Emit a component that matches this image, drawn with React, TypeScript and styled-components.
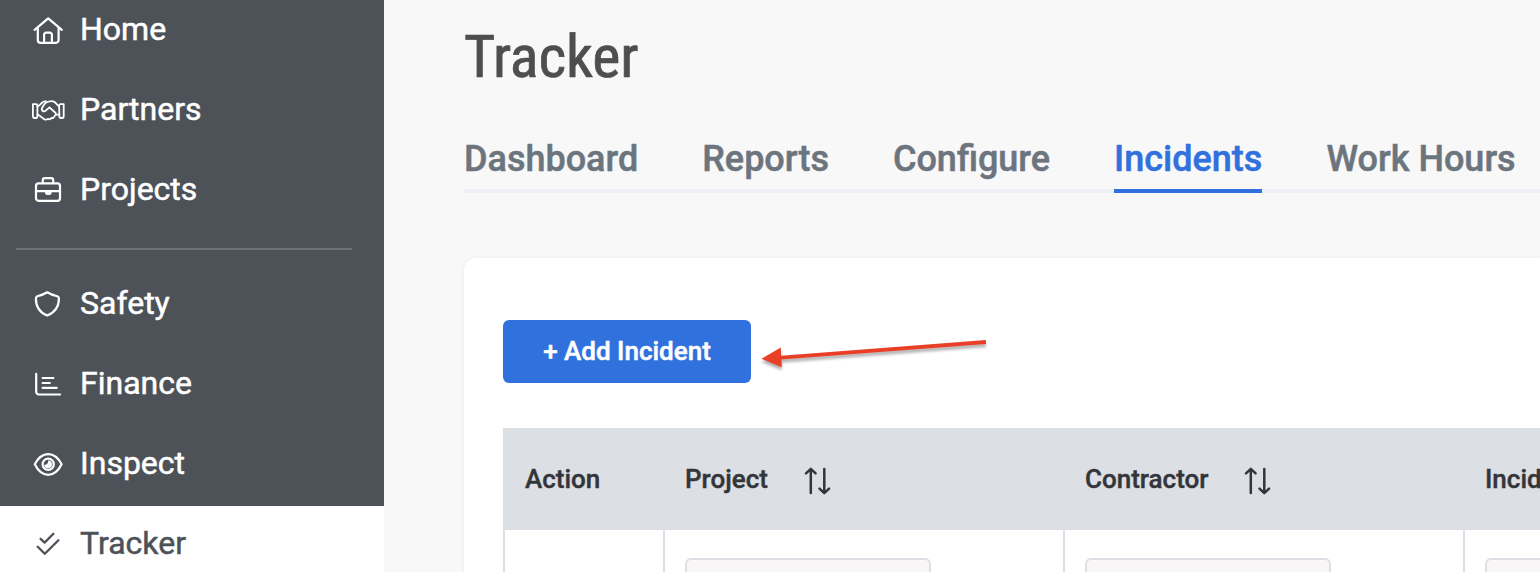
import React from "react";
import styled, { createGlobalStyle } from "styled-components";

const Global = createGlobalStyle`
  * { box-sizing: border-box; }
  body { margin: 0; font-family: Roboto, "Liberation Sans", sans-serif; background: #f8f8f8; overflow: hidden; }
`;

const Page = styled.div`
  display: flex;
  width: 100%;
  height: 572px;
  overflow: hidden;
`;

const Sidebar = styled.nav`
  flex: 0 0 384px;
  height: 572px;
  background: #4d5259;
  overflow: hidden;
`;

const NavList = styled.div`
  display: flex;
  flex-direction: column;
  margin-top: -8px;
`;

const NavItem = styled.a<{ $active?: boolean }>`
  display: flex;
  flex: 0 0 80px;
  align-items: center;
  gap: 16px;
  padding: 0 32px 4px;
  color: ${(p) => (p.$active ? "#4d5259" : "#ffffff")};
  background: ${(p) => (p.$active ? "#ffffff" : "transparent")};
`;

const NavLabel = styled.span`
  font-size: 32px;
  line-height: 38px;
  padding-bottom: 3px;
  white-space: nowrap;
  -webkit-text-stroke: 0.5px currentColor;
`;

const NavIcon = styled.svg`
  flex: none;
  width: 32px;
  height: 32px;
  overflow: visible;
  fill: none;
  stroke: currentColor;
  stroke-width: 2.2;
  stroke-linecap: round;
  stroke-linejoin: round;
`;

const Divider = styled.hr`
  width: 336px;
  height: 2px;
  margin: 16px;
  border: 0;
  background: #6d7279;
`;

const Main = styled.main`
  flex: 1;
  min-width: 0;
  padding: 21px 0 0 80px;
  overflow: hidden;
`;

const Title = styled.h1`
  margin: 0;
  height: 72px;
  width: max-content;
  font-size: 60px;
  line-height: 72px;
  font-weight: 400;
  letter-spacing: -0.15px;
  font-stretch: 75%;
  font-family: "Roboto Condensed", Roboto, sans-serif;
  color: #4e4e4e;
  -webkit-text-stroke: 0.7px currentColor;
`;

const Tabs = styled.div`
  display: flex;
  gap: 64px;
  height: 60px;
  margin-top: 40px;
  box-shadow: inset 0 -4px #edf1f6;
`;

const Tab = styled.a<{ $active?: boolean }>`
  flex: none;
  height: 60px;
  font-size: 36px;
  line-height: 52px;
  font-weight: 500;
  white-space: nowrap;
  color: ${(p) => (p.$active ? "#3071de" : "#6c757e")};
  border-bottom: 4px solid ${(p) => (p.$active ? "#3071de" : "transparent")};
  -webkit-text-stroke: 0.5px currentColor;
`;

const Card = styled.section`
  margin-top: 65px;
  height: 400px;
  padding: 62px 0 0 39px;
  background: #ffffff;
  border-radius: 12px 0 0 0;
  box-shadow: 0 0 4px rgba(0, 0, 0, 0.06);
`;

const ActionRow = styled.div`
  display: flex;
  position: relative;
`;

const AddButton = styled.button`
  width: 248px;
  height: 63px;
  padding: 0 0 1px;
  border: 0;
  border-radius: 6px;
  background: #3071de;
  color: #ffffff;
  font: 500 26px/32px Roboto, sans-serif;
  -webkit-text-stroke: 0.5px currentColor;
`;

const PointerArrow = styled.svg`
  position: absolute;
  left: 249px;
  top: 10px;
  width: 250px;
  height: 50px;
  overflow: visible;
  filter: drop-shadow(0 3px 1.5px rgba(0, 0, 0, 0.32));
`;

const Table = styled.div`
  display: grid;
  grid-template-columns: 160px 400px 400px 400px;
  grid-template-rows: 102px 120px;
  margin-top: 45px;
  width: 1360px;
`;

const HeadCell = styled.div`
  display: flex;
  align-items: center;
  gap: 36px;
  padding: 0 20px 0 22px;
  background: #dcdfe4;
  color: #343539;
  font-size: 26px;
  font-weight: 500;
  white-space: nowrap;
  -webkit-text-stroke: 0.4px currentColor;
`;

const FilterCell = styled.div`
  padding: 28px 20px 0;
  border-left: 2px solid #dcdfe4;
`;

const FilterInput = styled.input`
  display: block;
  width: 246px;
  height: 60px;
  border: 2px solid #dce0e5;
  border-radius: 6px;
  background: #f8f6f7;
`;

const SortSvg = styled.svg`
  width: 28px;
  height: 30px;
  margin-top: 3px;
  fill: none;
  stroke: currentColor;
  stroke-width: 2.5;
  stroke-linecap: round;
  stroke-linejoin: round;
`;

const SortIcon = () => (
  <SortSvg viewBox="0 0 28 30">
    <path d="M6.8 27V3M2 7.4l4.8-4.5 4.8 4.5M20.3 3v24M15.5 22.6l4.8 4.5 4.8-4.5" />
  </SortSvg>
);

const icons: Record<string, React.ReactNode> = {
  Home: (
    <path d="M2.6 15.8 16.2 4.4 29.8 15.8M5.8 13.4V26a2.8 2.8 0 0 0 2.8 2.8h15.2a2.8 2.8 0 0 0 2.8-2.8V13.4M12.1 28.5v-8a1.9 1.9 0 0 1 1.9-1.9h4a1.9 1.9 0 0 1 1.9 1.9v8" />
  ),
  Partners: (
    <g strokeWidth="1.8">
      <path d="M.9 10.2h3q1.5 0 1.5 1.5v10.6q0 1.7-1.5 1.7H2.5Q.9 24 .9 22.3zM31.7 10.2h-3q-1.7 0-1.6 1.5l.3 10.6q0 1.7 1.5 1.7h1.2q1.6 0 1.6-1.7z" />
      <path d="M5.5 12.5c2-.6 3-2.3 4.3-3.6 1-1 2.4-1.6 3.9-1.8M5.5 20.7c2 0 3 2.3 5.1 3.1 1.2 1.8 3.6 2.5 5.2 1 1.5.9 3 .5 3.7-.9 1.5.4 2.7-.4 3.1-2 .6-.4 1-.9 1.3-1.3h3.4" />
      <path d="M27.1 12.4c-2.6-1.2-2.8-5.3-7.4-5.3-3.1 0-5 .5-6.8 2.3l-2.6 4c-1.6 2.9 1 4.9 3.4 3.3l3.8-3.4 5.6 5.2c.9.8 1.1 1.6.7 2.2" />
    </g>
  ),
  Projects: (
    <>
      <rect x="4" y="9.3" width="24" height="17.5" rx="2.5" />
      <path d="M10.8 9V6.2a2 2 0 0 1 2-2h6.4a2 2 0 0 1 2 2V9M4 17.1h24" />
      <path fill="currentColor" stroke="none" d="M13 17h6.6v1.5a2.5 2.5 0 0 1-2.5 2.5h-1.6a2.5 2.5 0 0 1-2.5-2.5z" />
    </>
  ),
  Safety: (
    <path d="M15.2 4.3c3 1.9 6.1 3 9.4 3.7 1.7.4 2.3 1.1 2.3 2.7 0 7.9-4.2 13.7-11.7 16.9C7.7 24.4 3.9 18.6 3.9 10.7c0-1.6.6-2.3 2.2-2.7 3.2-.7 6.2-1.9 9.1-3.7z" />
  ),
  Finance: (
    <path d="M4.2 5.9v17.9a2.7 2.7 0 0 0 2.7 2.7H28M10.6 10h10.8M10.6 15h7.2M10.6 19.8h14.1" />
  ),
  Inspect: (
    <>
      <path d="M2.8 16.3C6 10 10.7 6.1 16.2 6.1S26.4 10 29.6 16.3C26.4 22.8 21.7 26.8 16.2 26.8S6 22.8 2.8 16.3z" />
      <circle cx="16.2" cy="16.2" r="5.6" />
      <path fill="currentColor" stroke="none" d="M16 12.4a3.9 3.9 0 1 1-3.8 4.4c2.4.4 4.3-1.8 3.8-4.4z" />
    </>
  ),
  Tracker: (
    <path strokeWidth="2.3" d="M8.6 10.8l4 3.8 8.8-8.8M5.7 18.7l7.1 7.1 13.6-13.6" />
  ),
};

const Item = ({ name, active }: { name: string; active?: boolean }) => (
  <NavItem $active={active}>
    <NavIcon viewBox="0 0 32 32">{icons[name]}</NavIcon>
    <NavLabel>{name}</NavLabel>
  </NavItem>
);

const tabs = ["Dashboard", "Reports", "Configure", "Incidents", "Work Hours"];

export default function App() {
  return (
    <Page>
      <Global />
      <Sidebar>
        <NavList>
          {["Home", "Partners", "Projects"].map((n) => (
            <Item key={n} name={n} />
          ))}
          <Divider />
          {["Safety", "Finance", "Inspect", "Tracker"].map((n) => (
            <Item key={n} name={n} active={n === "Tracker"} />
          ))}
        </NavList>
      </Sidebar>
      <Main>
        <Title>Tracker</Title>
        <Tabs>
          {tabs.map((t) => (
            <Tab key={t} $active={t === "Incidents"}>
              {t}
            </Tab>
          ))}
        </Tabs>
        <Card>
          <ActionRow>
            <AddButton>+ Add Incident</AddButton>
            <PointerArrow viewBox="752 330 250 50">
              <path fill="#e93f26" d="M761.5 358.8 780.8 347.6 781.1 355.7 986 340V344L781.4 359.4 781.8 367.3z" />
            </PointerArrow>
          </ActionRow>
          <Table>
            <HeadCell>Action</HeadCell>
            <HeadCell>
              Project <SortIcon />
            </HeadCell>
            <HeadCell>
              Contractor <SortIcon />
            </HeadCell>
            <HeadCell>Incident</HeadCell>
            <FilterCell />
            <FilterCell>
              <FilterInput />
            </FilterCell>
            <FilterCell>
              <FilterInput />
            </FilterCell>
            <FilterCell>
              <FilterInput />
            </FilterCell>
          </Table>
        </Card>
      </Main>
    </Page>
  );
}
